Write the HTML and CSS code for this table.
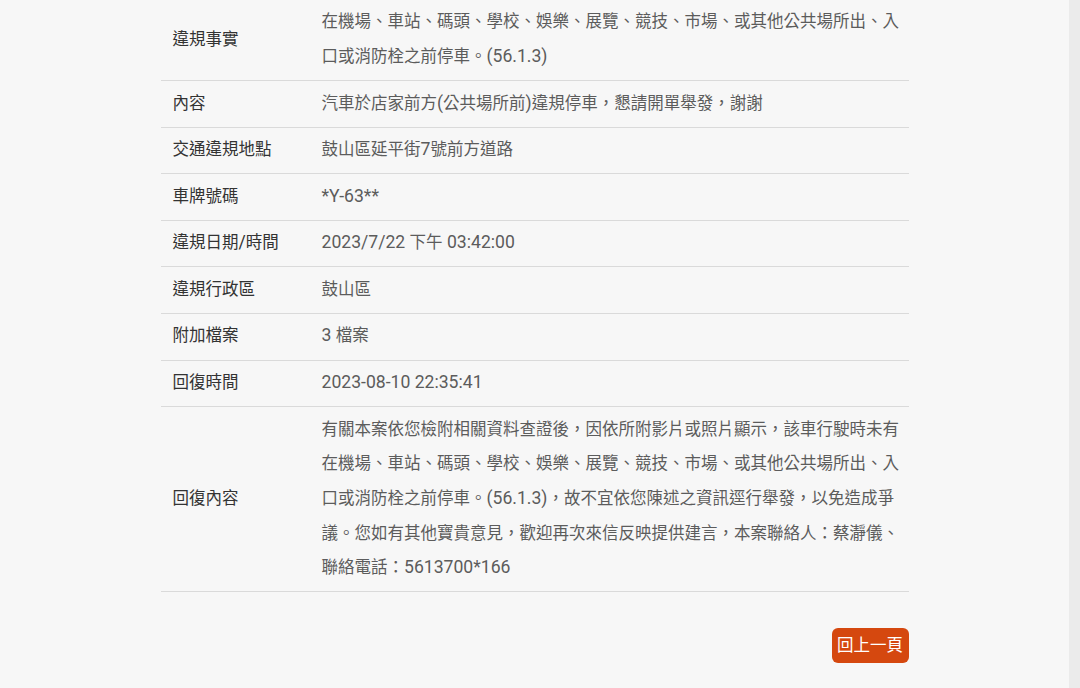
FILE: index.html
```html
<!DOCTYPE html>
<html lang="zh-Hant">
<head>
<meta charset="utf-8">
<title>案件詳細資料</title>
<link rel="stylesheet" href="styles.css">
</head>
<body>
<div class="page">
  <main class="content">
    <table class="detail">
      <tbody>
        <tr>
          <th>違規事實</th>
          <td>
            <span class="ln">在機場、車站、碼頭、學校、娛樂、展覽、競技、市場、或其他公共場所出、入</span>
            <span class="ln">口或消防栓之前停車。<span class="en">(56.1.3)</span></span>
          </td>
        </tr>
        <tr>
          <th>內容</th>
          <td>汽車於店家前方<span class="en">(</span>公共場所前<span class="en">)</span>違規停車，懇請開單舉發，謝謝</td>
        </tr>
        <tr>
          <th>交通違規地點</th>
          <td>鼓山區延平街<span class="en">7</span>號前方道路</td>
        </tr>
        <tr>
          <th>車牌號碼</th>
          <td><span class="en">*Y-63**</span></td>
        </tr>
        <tr>
          <th>違規日期<span class="en">/</span>時間</th>
          <td><span class="en">2023/7/22 </span>下午<span class="en"> 03:42:00</span></td>
        </tr>
        <tr>
          <th>違規行政區</th>
          <td>鼓山區</td>
        </tr>
        <tr>
          <th>附加檔案</th>
          <td><span class="en">3 </span>檔案</td>
        </tr>
        <tr>
          <th>回復時間</th>
          <td><span class="en">2023-08-10 22:35:41</span></td>
        </tr>
        <tr>
          <th>回復內容</th>
          <td>
            <span class="ln">有關本案依您檢附相關資料查證後，因依所附影片或照片顯示，該車行駛時未有</span>
            <span class="ln">在機場、車站、碼頭、學校、娛樂、展覽、競技、市場、或其他公共場所出、入</span>
            <span class="ln">口或消防栓之前停車。<span class="en">(56.1.3)</span>，故不宜依您陳述之資訊逕行舉發，以免造成爭</span>
            <span class="ln">議。您如有其他寶貴意見，歡迎再次來信反映提供建言，本案聯絡人：蔡瀞儀、</span>
            <span class="ln">聯絡電話：<span class="en">5613700*166</span></span>
          </td>
        </tr>
      </tbody>
    </table>
    <div class="actions">
      <button class="btn-back" type="button">回上一頁</button>
    </div>
  </main>
  <div class="rail"></div>
</div>
</body>
</html>
```

FILE: styles.css
```css
* { box-sizing: border-box; }

html, body {
  margin: 0;
  padding: 0;
  height: 100%;
  overflow: hidden;
}

body {
  background: #f7f7f7;
  font-family: "Roboto", "Noto Sans CJK TC", sans-serif;
  font-size: 16.5px;
  color: #333;
}

.page {
  display: flex;
  height: 688px;
}

.content {
  flex: 1;
  display: flex;
  flex-direction: column;
  align-items: center;
}

.rail {
  width: 11px;
  background: #ebebeb;
}

.detail {
  width: 748px;
  border-collapse: collapse;
  table-layout: fixed;
}

.detail th,
.detail td {
  padding: 5.43px 0;
  line-height: 34.7px;
  border-bottom: 1px solid #dadada;
  vertical-align: middle;
  font-weight: 400;
  text-align: left;
  white-space: nowrap;
}

.detail th {
  width: 149px;
  padding-left: 12px;
  color: #333;
}

.detail td {
  padding-left: 12px;
  padding-right: 0;
  color: #5c5c5c;
}

.ln {
  display: block;
}

.en {
  font-size: 17.6px;
  line-height: 1;
}

.actions {
  width: 748px;
  display: flex;
  justify-content: flex-end;
  padding-top: 36px;
}

.btn-back {
  font-family: "Roboto", "Noto Sans CJK TC", sans-serif;
  font-size: 16.5px;
  line-height: 23px;
  color: #fff;
  background: #d5480f;
  border: none;
  border-radius: 6px;
  padding: 6px 5px;
  width: 77px;
  height: 35px;
}
```
